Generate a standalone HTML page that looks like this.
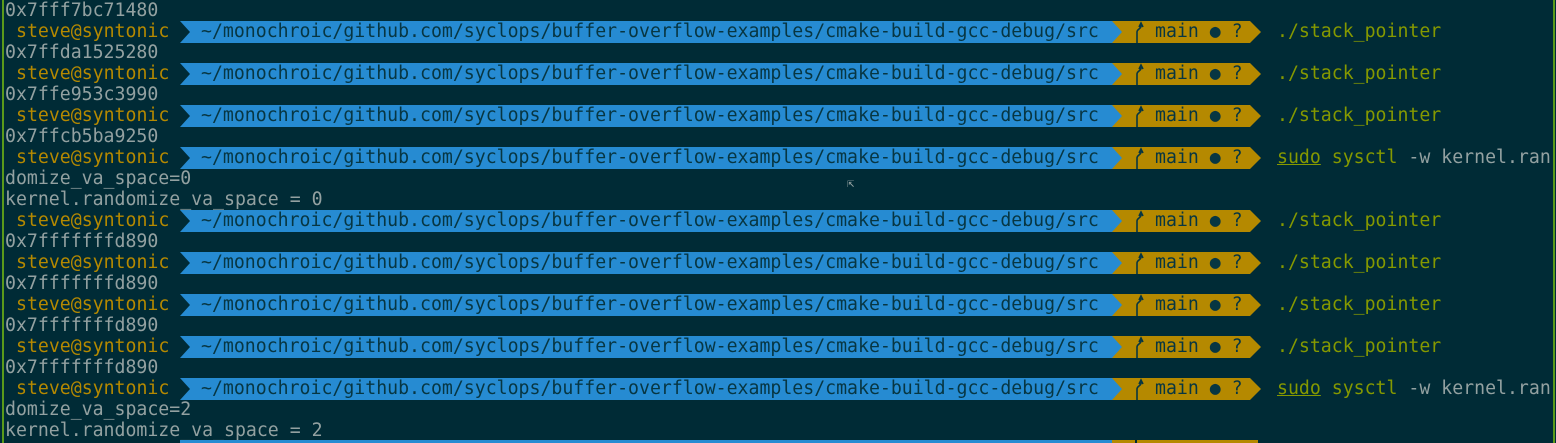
<!DOCTYPE html>
<html style="height:443px;overflow:hidden"><head><meta charset="utf-8"><style>
body{margin:0;width:1556px;height:443px;background:#002b36;overflow:hidden;position:relative;font-family:"DejaVu Sans Mono","Liberation Mono",monospace;font-size:18.2px}
.l{position:absolute;left:5px;white-space:pre;color:#93a1a1;line-height:21px;height:21px}
.p{position:absolute;left:0;width:1556px;height:21px}
.p svg{position:absolute;left:0;top:0}
.t{position:absolute;top:0;line-height:22px;white-space:pre}
.u{color:#b58900;left:16px}
.d{color:#073642;left:201px}
.m{color:#073642;left:1155px}
.c{color:#859900;left:1277px}
.g{color:#93a1a1}
.bl{position:absolute;left:2px;top:0;width:2px;height:443px;background:#5a9a1a}
.br{position:absolute;left:1553px;top:0;width:2px;height:443px;background:#5a9a1a}
</style></head><body>
<div class="bl"></div><div class="br"></div>

<div class="l" style="top:0px">0x7fff7bc71480</div>
<div class="p" style="top:21px"><svg width="1300" height="22"><polygon points="1108,0 1250,0 1261,11 1250,22 1108,22" fill="#b58900"/><polygon points="180,0 1112,0 1122,11 1112,22 180,22 190,11" fill="#268bd2"/><path d="M1137 22V11c0-3 4-3 4-6V2M1139 6l2-4 2 4" stroke="#073642" stroke-width="1.6" fill="none"/></svg><span class="t u">steve@syntonic</span><span class="t d">~/monochroic/github.com/syclops/buffer-overflow-examples/cmake-build-gcc-debug/src</span><span class="t m">main ● ?</span><span class="t c">./stack_pointer</span></div>
<div class="l" style="top:42px">0x7ffda1525280</div>
<div class="p" style="top:63px"><svg width="1300" height="22"><polygon points="1108,0 1250,0 1261,11 1250,22 1108,22" fill="#b58900"/><polygon points="180,0 1112,0 1122,11 1112,22 180,22 190,11" fill="#268bd2"/><path d="M1137 22V11c0-3 4-3 4-6V2M1139 6l2-4 2 4" stroke="#073642" stroke-width="1.6" fill="none"/></svg><span class="t u">steve@syntonic</span><span class="t d">~/monochroic/github.com/syclops/buffer-overflow-examples/cmake-build-gcc-debug/src</span><span class="t m">main ● ?</span><span class="t c">./stack_pointer</span></div>
<div class="l" style="top:84px">0x7ffe953c3990</div>
<div class="p" style="top:105px"><svg width="1300" height="22"><polygon points="1108,0 1250,0 1261,11 1250,22 1108,22" fill="#b58900"/><polygon points="180,0 1112,0 1122,11 1112,22 180,22 190,11" fill="#268bd2"/><path d="M1137 22V11c0-3 4-3 4-6V2M1139 6l2-4 2 4" stroke="#073642" stroke-width="1.6" fill="none"/></svg><span class="t u">steve@syntonic</span><span class="t d">~/monochroic/github.com/syclops/buffer-overflow-examples/cmake-build-gcc-debug/src</span><span class="t m">main ● ?</span><span class="t c">./stack_pointer</span></div>
<div class="l" style="top:126px">0x7ffcb5ba9250</div>
<div class="p" style="top:147px"><svg width="1300" height="22"><polygon points="1108,0 1250,0 1261,11 1250,22 1108,22" fill="#b58900"/><polygon points="180,0 1112,0 1122,11 1112,22 180,22 190,11" fill="#268bd2"/><path d="M1137 22V11c0-3 4-3 4-6V2M1139 6l2-4 2 4" stroke="#073642" stroke-width="1.6" fill="none"/></svg><span class="t u">steve@syntonic</span><span class="t d">~/monochroic/github.com/syclops/buffer-overflow-examples/cmake-build-gcc-debug/src</span><span class="t m">main ● ?</span><span class="t c"><u>sudo</u> sysctl <span class="g">-w kernel.ran</span></span></div>
<div class="l" style="top:168px">domize_va_space=0</div>
<div class="l" style="top:189px">kernel.randomize_va_space = 0</div>
<div class="p" style="top:210px"><svg width="1300" height="22"><polygon points="1108,0 1250,0 1261,11 1250,22 1108,22" fill="#b58900"/><polygon points="180,0 1112,0 1122,11 1112,22 180,22 190,11" fill="#268bd2"/><path d="M1137 22V11c0-3 4-3 4-6V2M1139 6l2-4 2 4" stroke="#073642" stroke-width="1.6" fill="none"/></svg><span class="t u">steve@syntonic</span><span class="t d">~/monochroic/github.com/syclops/buffer-overflow-examples/cmake-build-gcc-debug/src</span><span class="t m">main ● ?</span><span class="t c">./stack_pointer</span></div>
<div class="l" style="top:231px">0x7fffffffd890</div>
<div class="p" style="top:252px"><svg width="1300" height="22"><polygon points="1108,0 1250,0 1261,11 1250,22 1108,22" fill="#b58900"/><polygon points="180,0 1112,0 1122,11 1112,22 180,22 190,11" fill="#268bd2"/><path d="M1137 22V11c0-3 4-3 4-6V2M1139 6l2-4 2 4" stroke="#073642" stroke-width="1.6" fill="none"/></svg><span class="t u">steve@syntonic</span><span class="t d">~/monochroic/github.com/syclops/buffer-overflow-examples/cmake-build-gcc-debug/src</span><span class="t m">main ● ?</span><span class="t c">./stack_pointer</span></div>
<div class="l" style="top:273px">0x7fffffffd890</div>
<div class="p" style="top:294px"><svg width="1300" height="22"><polygon points="1108,0 1250,0 1261,11 1250,22 1108,22" fill="#b58900"/><polygon points="180,0 1112,0 1122,11 1112,22 180,22 190,11" fill="#268bd2"/><path d="M1137 22V11c0-3 4-3 4-6V2M1139 6l2-4 2 4" stroke="#073642" stroke-width="1.6" fill="none"/></svg><span class="t u">steve@syntonic</span><span class="t d">~/monochroic/github.com/syclops/buffer-overflow-examples/cmake-build-gcc-debug/src</span><span class="t m">main ● ?</span><span class="t c">./stack_pointer</span></div>
<div class="l" style="top:315px">0x7fffffffd890</div>
<div class="p" style="top:336px"><svg width="1300" height="22"><polygon points="1108,0 1250,0 1261,11 1250,22 1108,22" fill="#b58900"/><polygon points="180,0 1112,0 1122,11 1112,22 180,22 190,11" fill="#268bd2"/><path d="M1137 22V11c0-3 4-3 4-6V2M1139 6l2-4 2 4" stroke="#073642" stroke-width="1.6" fill="none"/></svg><span class="t u">steve@syntonic</span><span class="t d">~/monochroic/github.com/syclops/buffer-overflow-examples/cmake-build-gcc-debug/src</span><span class="t m">main ● ?</span><span class="t c">./stack_pointer</span></div>
<div class="l" style="top:357px">0x7fffffffd890</div>
<div class="p" style="top:378px"><svg width="1300" height="22"><polygon points="1108,0 1250,0 1261,11 1250,22 1108,22" fill="#b58900"/><polygon points="180,0 1112,0 1122,11 1112,22 180,22 190,11" fill="#268bd2"/><path d="M1137 22V11c0-3 4-3 4-6V2M1139 6l2-4 2 4" stroke="#073642" stroke-width="1.6" fill="none"/></svg><span class="t u">steve@syntonic</span><span class="t d">~/monochroic/github.com/syclops/buffer-overflow-examples/cmake-build-gcc-debug/src</span><span class="t m">main ● ?</span><span class="t c"><u>sudo</u> sysctl <span class="g">-w kernel.ran</span></span></div>
<div class="l" style="top:399px">domize_va_space=2</div>
<div class="l" style="top:420px">kernel.randomize_va_space = 2</div>
<div class="p" style="top:440px"><svg width="1300" height="3"><rect x="1108" y="0" width="150" height="3" fill="#b58900"/><rect x="180" y="0" width="932" height="3" fill="#268bd2"/><rect x="1135" y="0" width="2" height="3" fill="#002b36"/></svg></div>
<div style="position:absolute;left:847px;top:176px;color:#93a1a1;font-size:12px">⇱</div>
</body></html>
